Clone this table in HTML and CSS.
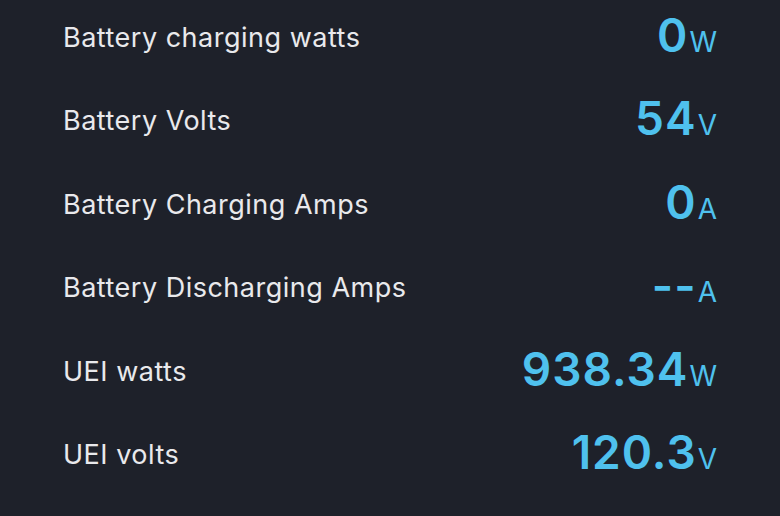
FILE: index.html
```html
<!DOCTYPE html>
<html>
<head>
<meta charset="utf-8">
<link rel="stylesheet" href="styles.css">
</head>
<body>
<ul class="list">
  <li class="row"><span class="label">Battery charging watts</span><span class="value">0<span class="unit">W</span></span></li>
  <li class="row"><span class="label">Battery Volts</span><span class="value">54<span class="unit">V</span></span></li>
  <li class="row"><span class="label">Battery Charging Amps</span><span class="value">0<span class="unit">A</span></span></li>
  <li class="row"><span class="label">Battery Discharging Amps</span><span class="value">--<span class="unit">A</span></span></li>
  <li class="row"><span class="label">UEI watts</span><span class="value">938.34<span class="unit">W</span></span></li>
  <li class="row"><span class="label">UEI volts</span><span class="value">120.3<span class="unit">V</span></span></li>
</ul>
</body>
</html>
```
FILE: styles.css
```css
html, body {
  margin: 0;
  padding: 0;
  background: #1e212a;
  height: 100%;
  overflow: hidden;
}
body {
  font-family: Inter, "Noto Sans", sans-serif;
}
.list {
  list-style: none;
  margin: 0;
  padding: 0 63px;
}
.row {
  height: 83.4px;
  display: flex;
  justify-content: space-between;
  align-items: flex-start;
}
.label {
  color: #e9e9ec;
  font-size: 27px;
  letter-spacing: 0.5px;
  line-height: 32px;
  padding-top: 22px;
}
.value {
  color: #4fc1ee;
  font-size: 46px;
  font-weight: 600;
  line-height: 50px;
  padding-top: 10px;
  letter-spacing: 1px;
}
.unit {
  font-size: 28px;
  font-weight: 400;
  letter-spacing: 0;
  margin-left: 1px;
}
```
